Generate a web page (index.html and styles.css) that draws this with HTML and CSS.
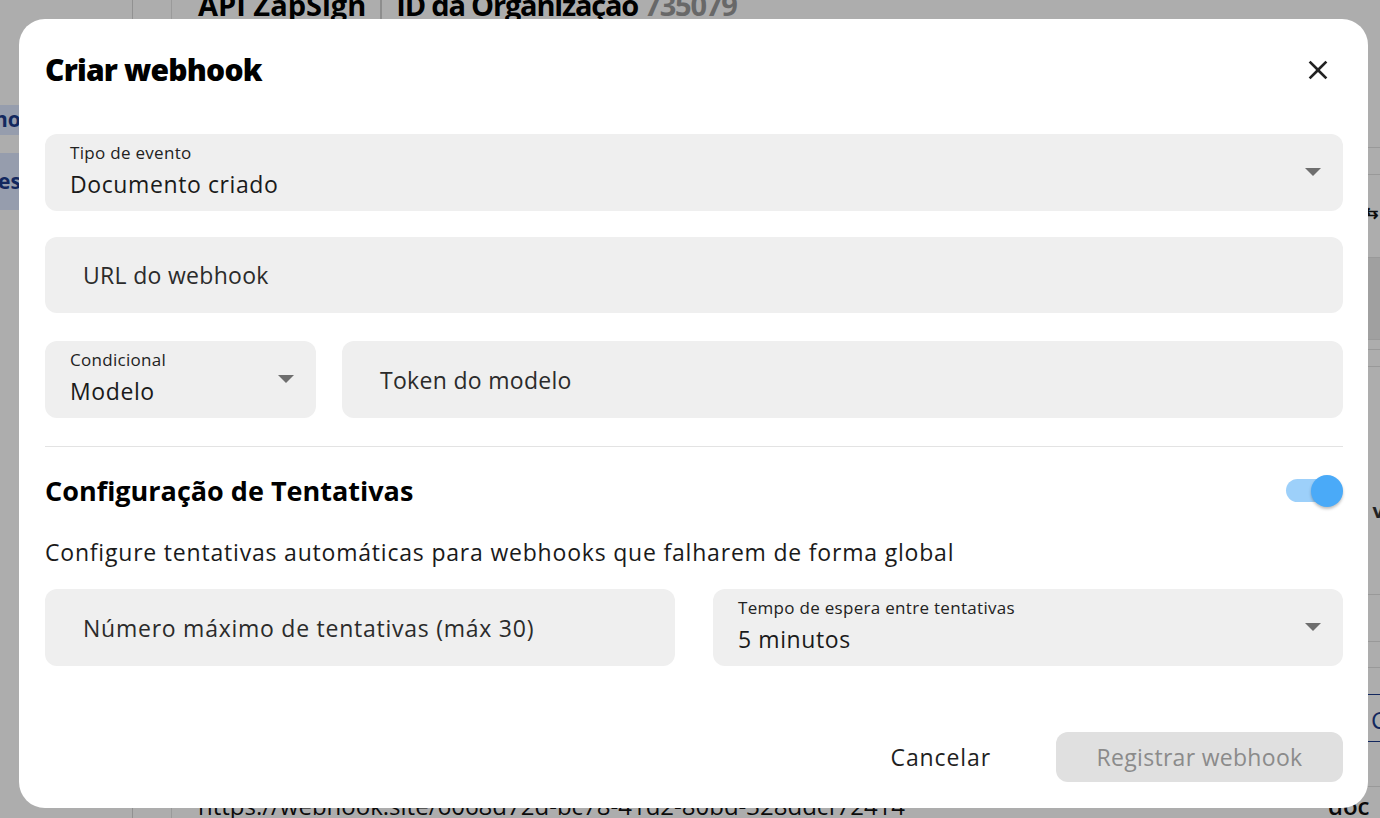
FILE: index.html
```html
<!DOCTYPE html>
<html lang="pt-BR">
<head>
<meta charset="utf-8">
<title>Criar webhook</title>
<link rel="stylesheet" href="styles.css">
</head>
<body>
<div class="page">
  <aside class="sidebar">
    <div class="side-item side-item-1">nov</div>
    <div class="side-item side-item-2">es</div>
  </aside>
  <div class="gutter"></div>
  <main class="main">
    <div class="main-head">
      <span class="head-title">API ZapSign</span>
      <span class="head-sep"></span>
      <span class="head-title head-org">ID da Organização <span class="head-id">735079</span></span>
    </div>
    <div class="table">
      <div class="trow h46"></div>
      <div class="trow h27"></div>
      <div class="trow h83 sort"><span class="sort-ic">⇆</span></div>
      <div class="trow h82 dark"></div>
      <div class="trow h10"></div>
      <div class="trow h17"></div>
      <div class="trow h228"><span class="cell-v">v</span></div>
      <div class="trow h47"></div>
      <div class="trow h26"></div>
      <div class="trow h27 blue-top"></div>
      <div class="trow h47 blue-bot"><span class="cell-c">C</span></div>
      <div class="trow h45"></div>
      <div class="trow url">https://webhook.site/6068d72d-bc78-41d2-80bd-328ddcf72414 <span class="doc">doc</span></div>
    </div>
  </main>
</div>

<div class="backdrop"></div>

<section class="dialog" role="dialog" aria-label="Criar webhook">
  <header class="dialog-head">
    <h2 class="dialog-title">Criar webhook</h2>
    <button class="close-btn" aria-label="Fechar">
      <svg width="32" height="32" viewBox="0 0 24 24"><path d="M19 6.41L17.59 5 12 10.59 6.41 5 5 6.41 10.59 12 5 17.59 6.41 19 12 13.41 17.59 19 19 17.59 13.41 12z" fill="#222"/></svg>
    </button>
  </header>

  <div class="field field-select field-1">
    <div class="field-text">
      <span class="field-label">Tipo de evento</span>
      <span class="field-value">Documento criado</span>
    </div>
    <svg class="caret" width="16" height="8" viewBox="0 0 16 8"><path d="M0 0h16L8 8z" fill="#6e6e6e"/></svg>
  </div>

  <div class="field field-input field-2">
    <span class="placeholder">URL do webhook</span>
  </div>

  <div class="row row-cond">
    <div class="field field-select field-cond">
      <div class="field-text">
        <span class="field-label">Condicional</span>
        <span class="field-value">Modelo</span>
      </div>
      <svg class="caret" width="16" height="8" viewBox="0 0 16 8"><path d="M0 0h16L8 8z" fill="#6e6e6e"/></svg>
    </div>
    <div class="field field-input field-token">
      <span class="placeholder">Token do modelo</span>
    </div>
  </div>

  <div class="divider"></div>

  <div class="section-head">
    <h3 class="section-title">Configuração de Tentativas</h3>
    <div class="toggle" aria-checked="true" role="switch">
      <span class="toggle-track"></span>
      <span class="toggle-thumb"></span>
    </div>
  </div>

  <p class="desc">Configure tentativas automáticas para webhooks que falharem de forma global</p>

  <div class="row-retry">
    <div class="field field-input">
      <span class="placeholder placeholder-wide">Número máximo de tentativas (máx 30)</span>
    </div>
    <div class="field field-select">
      <div class="field-text">
        <span class="field-label">Tempo de espera entre tentativas</span>
        <span class="field-value">5 minutos</span>
      </div>
      <svg class="caret" width="16" height="8" viewBox="0 0 16 8"><path d="M0 0h16L8 8z" fill="#6e6e6e"/></svg>
    </div>
  </div>

  <div class="actions">
    <button class="btn btn-text">Cancelar</button>
    <button class="btn btn-primary" disabled>Registrar webhook</button>
  </div>
</section>
</body>
</html>
```

FILE: styles.css
```css
* { box-sizing: border-box; }

html, body {
  margin: 0;
  padding: 0;
  width: 1380px;
  height: 818px;
  overflow: hidden;
  background: #ffffff;
  font-family: "Open Sans", "Liberation Sans", sans-serif;
  color: #1f1f1f;
}

/* ---------- background page ---------- */
.page {
  display: grid;
  grid-template-columns: 133px 39px 1fr;
  height: 818px;
}

.sidebar {
  border-right: 1px solid #d6d6d6;
  padding-top: 105px;
  overflow: hidden;
}

.side-item {
  background: #dde8ff;
  color: #1c3c8c;
  font-weight: 700;
  font-size: 21px;
  overflow: hidden;
  white-space: nowrap;
}

.side-item-1 { height: 30px; line-height: 28px; margin-left: -6px; }
.side-item-2 { height: 57px; line-height: 57px; margin-top: 18px; margin-left: -2px; }

.gutter { border-right: 1px solid #e4e4e4; }

.main {
  padding-left: 26px;
  display: flex;
  flex-direction: column;
  min-width: 0;
}

.main-head {
  margin-top: -14px;
  height: 116px;
  display: flex;
  align-items: flex-start;
  gap: 14px;
  font-size: 29px;
  font-weight: 700;
  color: #000;
  line-height: 38px;
  white-space: nowrap;
}

.head-org { letter-spacing: -1.2px; }

.head-sep {
  width: 2px;
  height: 32px;
  background: #d0d0d0;
  margin-top: 4px;
}

.head-id { color: #9a9a9a; }

.table { display: flex; flex-direction: column; }

.trow {
  border-bottom: 1px solid #e2e2e2;
  position: relative;
  font-size: 18px;
}

.h10 { height: 10px; }
.h17 { height: 17px; }
.h26 { height: 26px; }
.h27 { height: 27px; }
.h45 { height: 45px; }
.h46 { height: 46px; }
.h47 { height: 47px; }
.h82 { height: 82px; }
.h83 { height: 83px; }
.h228 { height: 228px; }

.dark { background: #ececec; }
.blue-top { border-bottom-color: #1c3c8c; }
.blue-bot { border-bottom-color: #1c3c8c; }

.sort { display: flex; justify-content: flex-end; padding-top: 26px; padding-right: 2px; }
.sort-ic { font-size: 16px; font-weight: 700; color: #111; }
.cell-v { position: absolute; right: -4px; top: 130px; font-size: 20px; font-weight: 700; color: #333; }
.cell-c { position: absolute; right: -6px; top: 8px; font-size: 24px; color: #1c3c8c; }

.url {
  border-bottom: none;
  font-size: 24px;
  line-height: 30px;
  color: #111;
  white-space: nowrap;
  padding-top: 4px;
}

.doc {
  position: absolute;
  left: 1130px;
  top: 4px;
  font-weight: 600;
}

/* ---------- backdrop ---------- */
.backdrop {
  position: fixed;
  inset: 0;
  background: rgba(0, 0, 0, 0.32);
}

/* ---------- dialog ---------- */
.dialog {
  position: fixed;
  left: 19px;
  top: 19px;
  width: 1349px;
  height: 789px;
  background: #ffffff;
  border-radius: 26px;
  padding: 35px 25px 26px 26px;
  display: flex;
  flex-direction: column;
}

.dialog-head {
  display: flex;
  align-items: center;
  justify-content: space-between;
  height: 32px;
  flex: none;
}

.dialog-title {
  margin: 0;
  font-size: 30px;
  font-weight: 800;
  color: #000;
  line-height: 32px;
  letter-spacing: -0.8px;
}

.close-btn {
  border: none;
  background: none;
  padding: 0;
  width: 32px;
  height: 32px;
  margin-right: 9px;
  display: flex;
}

.field {
  background: #efefef;
  border-radius: 12px;
  display: flex;
  align-items: center;
  flex: none;
  min-width: 0;
}

.field-select {
  height: 77px;
  padding: 0 22px 0 25px;
  justify-content: space-between;
}

.field-text {
  align-self: flex-start;
  display: flex;
  flex-direction: column;
  padding-top: 8px;
}

.field-label {
  font-size: 17px;
  line-height: 22px;
  color: #222;
  letter-spacing: 0.3px;
  white-space: nowrap;
}

.field-value {
  font-size: 23px;
  line-height: 30px;
  margin-top: 5px;
  color: #1a1a1a;
  letter-spacing: 0.6px;
  white-space: nowrap;
}

.caret { margin-top: -2px; flex: none; }

.field-input {
  height: 76px;
  padding: 0 38px;
}

.placeholder {
  font-size: 23px;
  color: #2b2b2b;
  letter-spacing: 0.3px;
  line-height: 30px;
  white-space: nowrap;
}

.placeholder-wide { letter-spacing: 0.75px; }

.field-1 { margin-top: 48px; }
.field-2 { margin-top: 26px; }

.row { display: flex; flex: none; }

.row-cond { margin-top: 28px; gap: 26px; }
.field-cond { width: 271px; }
.field-token { flex: 1; height: 77px; }

.divider {
  margin-top: 28px;
  height: 1px;
  background: #e3e3e3;
  flex: none;
}

.section-head {
  margin-top: 28px;
  height: 32px;
  display: flex;
  align-items: center;
  justify-content: space-between;
  flex: none;
}

.section-title {
  margin: 0;
  font-size: 27px;
  line-height: 32px;
  font-weight: 700;
  color: #000;
}

.toggle {
  position: relative;
  width: 57px;
  height: 32px;
}

.toggle-track {
  position: absolute;
  left: 0;
  top: 4px;
  width: 50px;
  height: 23px;
  border-radius: 12px;
  background: #9dd0fa;
}

.toggle-thumb {
  position: absolute;
  right: 0;
  top: 0;
  width: 32px;
  height: 32px;
  border-radius: 50%;
  background: #4aaaf8;
  box-shadow: 0 2px 3px rgba(0, 0, 0, 0.25);
}

.desc {
  margin: 31px 0 0;
  font-size: 23px;
  line-height: 28px;
  color: #1a1a1a;
  letter-spacing: 0.8px;
  white-space: nowrap;
}

.row-retry {
  margin-top: 23px;
  display: grid;
  grid-template-columns: 1fr 1fr;
  gap: 38px;
  flex: none;
}

.row-retry .field { height: 77px; }

.actions {
  margin-top: 66px;
  display: flex;
  justify-content: flex-end;
  align-items: center;
  flex: none;
}

.btn {
  font-family: inherit;
  font-size: 23px;
  font-weight: 500;
  height: 50px;
  border: none;
  border-radius: 12px;
  letter-spacing: 0.3px;
}

.btn-text {
  background: none;
  color: #1f1f1f;
  padding: 0 24px;
  margin-right: 41px;
  letter-spacing: 0.9px;
}

.btn-primary {
  width: 287px;
  background: #e0e0e0;
  color: #8b8b8b;
}
```
